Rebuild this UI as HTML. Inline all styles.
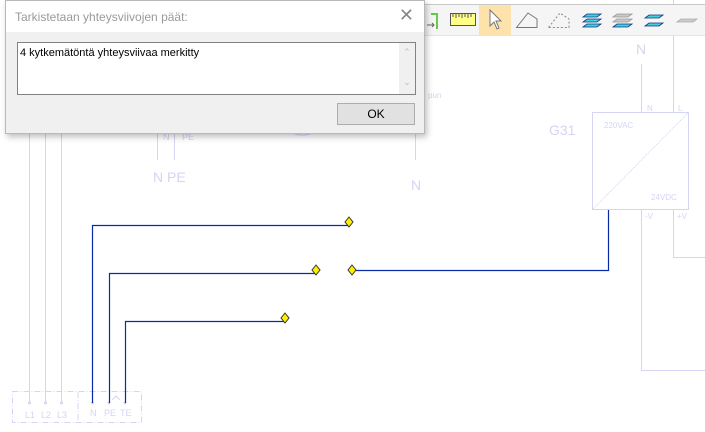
<!DOCTYPE html>
<html><head><meta charset="utf-8"><style>
html,body{margin:0;padding:0;width:705px;height:432px;overflow:hidden;background:#fff;font-family:"Liberation Sans",sans-serif}
svg{position:absolute;left:0;top:0}
.dlg{position:absolute;left:5px;top:0;width:418px;height:132px;background:#f0f0f0;border:1px solid #b9b9b9;box-shadow:2px 3px 6px rgba(0,0,0,.25)}
.tt{position:absolute;left:0;top:0;width:418px;height:31px;background:#fff}
.tt span{position:absolute;left:9px;top:9px;font-size:12px;color:#9a9a9a}
.tt b{position:absolute;right:10px;top:4px;font-weight:normal;font-size:18px;color:#888}
.ta{position:absolute;left:11px;top:41px;width:397px;height:51px;background:#fff;border:1px solid #828282}
.ta span{position:absolute;left:2px;top:4px;font-size:11px;color:#000}
.sb{position:absolute;right:0;top:0;width:16px;height:51px;background:#f0f0f0;color:#bbb;font-size:9px;text-align:center}
.ok{position:absolute;left:331px;top:102px;width:76px;height:20px;background:#e1e1e1;border:1px solid #adadad;font-size:12px;text-align:center;line-height:20px}
</style></head><body>
<svg width="705" height="432" viewBox="0 0 705 432">
<g stroke="#d4d4f4" stroke-width="1" fill="none">
<line x1="29.5" y1="0" x2="29.5" y2="403"/><line x1="45.5" y1="0" x2="45.5" y2="403"/><line x1="61.5" y1="0" x2="61.5" y2="403"/>
<line x1="157.5" y1="130" x2="157.5" y2="160"/><line x1="174.5" y1="130" x2="174.5" y2="160"/>
<line x1="415.5" y1="130" x2="415.5" y2="160"/>
<path d="M290 132 Q302 138 315 132"/>
<line x1="641.5" y1="64" x2="641.5" y2="112"/><line x1="673.5" y1="0" x2="673.5" y2="112"/>
<rect x="592.5" y="112.5" width="96" height="97"/>
<line x1="593" y1="209" x2="688" y2="113" stroke-dasharray="1 1"/>
<polyline points="641.5,210 641.5,370.5 705,370.5"/>
<polyline points="673.5,210 673.5,257.5 705,257.5"/>
<rect x="12.5" y="391.5" width="129" height="31" stroke-dasharray="6 2 1 2"/>
<line x1="78" y1="392" x2="78" y2="423" stroke-dasharray="6 2 1 2"/>
<path d="M112 400 L116 396 L120 400"/>
</g>
<g fill="#d4d4f4" font-family="Liberation Sans" >
<circle cx="29.5" cy="403" r="1.5"/><circle cx="45.5" cy="403" r="1.5"/><circle cx="61.5" cy="403" r="1.5"/>
<circle cx="92.5" cy="403" r="1.5"/><circle cx="109" cy="403" r="1.5"/><circle cx="125" cy="403" r="1.5"/>
<text x="25" y="418" font-size="9">L1</text><text x="41" y="418" font-size="9">L2</text><text x="57" y="418" font-size="9">L3</text>
<text x="90" y="416" font-size="9">N</text><text x="104" y="416" font-size="9">PE</text><text x="120" y="416" font-size="9">TE</text>
<text x="163" y="140" font-size="9">N</text><text x="182" y="140" font-size="9">PE</text>
<text x="153" y="182" font-size="14">N PE</text>
<text x="411" y="190" font-size="14">N</text>
<text x="428" y="98" font-size="8">pun</text>
<text x="636" y="54" font-size="14">N</text>
<text x="647" y="111" font-size="8">N</text><text x="678" y="111" font-size="8">L</text>
<text x="549" y="135" font-size="14">G31</text>
<text x="604" y="128" font-size="8">220VAC</text>
<text x="651" y="200" font-size="8">24VDC</text>
<text x="645" y="219" font-size="8">-V</text><text x="677" y="219" font-size="8">+V</text>
</g>
<g stroke="#0a2aa8" stroke-width="1.2" fill="none">
<polyline points="92.5,403 92.5,225.5 349,225.5"/>
<polyline points="109.5,403 109.5,273.5 316,273.5"/>
<polyline points="125.5,403 125.5,321.5 285,321.5"/>
<polyline points="352,270.5 608.5,270.5 608.5,210"/>
</g>
<g fill="#ffee00" stroke="#333" stroke-width="1">
<path d="M349 217 L353 222 L349 227 L345 222Z"/>
<path d="M316 265 L320 270 L316 275 L312 270Z"/>
<path d="M352 265 L356 270 L352 275 L348 270Z"/>
<path d="M285 313 L289 318 L285 323 L281 318Z"/>
</g>
<rect x="424" y="4" width="281" height="31" fill="#f5f5f5"/>
<line x1="424" y1="4.5" x2="705" y2="4.5" stroke="#c8c8c8"/>
<line x1="424" y1="35.5" x2="705" y2="35.5" stroke="#e4e4e4"/>
<line x1="673.5" y1="0" x2="673.5" y2="4" stroke="#d4d4f4"/>
<rect x="479" y="5" width="32" height="30" fill="#fde3ab"/>
<g fill="none" stroke-width="1">
<path d="M431 14 H436 M437 13 V29" stroke="#66cc44" stroke-width="2"/>
<path d="M427 25 H434 M432 23 L434 25 L432 27" stroke="#666"/>
<rect x="450.5" y="13.5" width="25" height="12" fill="#ffff88" stroke="#555"/>
<path d="M453 14v3M456 14v4M459 14v3M462 14v4M465 14v3M468 14v4M471 14v3" stroke="#555"/>
<path d="M490 10 L490 26 L494 22 L497 29 L499 28 L496 21 L501 21 Z" fill="#fff" stroke="#777"/>
<path d="M516.5 27.5 L528 13 L537 19 L537 27.5 Z" stroke="#777"/>
<path d="M548.5 27.5 L560 13 L569 19 L569 27.5 Z" stroke="#888" stroke-dasharray="2 2"/>
</g>
<g stroke="#138" stroke-width=".8">
<path d="M587 14 H601 L597 17 H583Z M587 19 H601 L597 22 H583Z M587 24 H601 L597 27 H583Z" fill="#44d0d8"/>
<path d="M617 14 H632 L628 17 H613Z M617 19 H632 L628 22 H613Z" fill="#c8c8c8" stroke="#999"/>
<path d="M617 24 H632 L628 27 H613Z" fill="#44d0d8"/>
<path d="M649 15 H663 L659 18 H645Z M649 23 H663 L659 26 H645Z" fill="#44d0d8"/>
<path d="M681 19 H697 L693 22 H677Z" fill="#ccc" stroke="#aaa"/>
</g>
</svg>
<div class="dlg">
<div class="tt"><span>Tarkistetaan yhteysviivojen päät:</span><b>✕</b></div>
<div class="ta"><span>4 kytkemätöntä yhteysviivaa merkitty</span><div class="sb"><div style="margin-top:4px">⌃</div><div style="margin-top:19px">⌄</div></div></div>
<div class="ok">OK</div>
</div>
</body></html>
